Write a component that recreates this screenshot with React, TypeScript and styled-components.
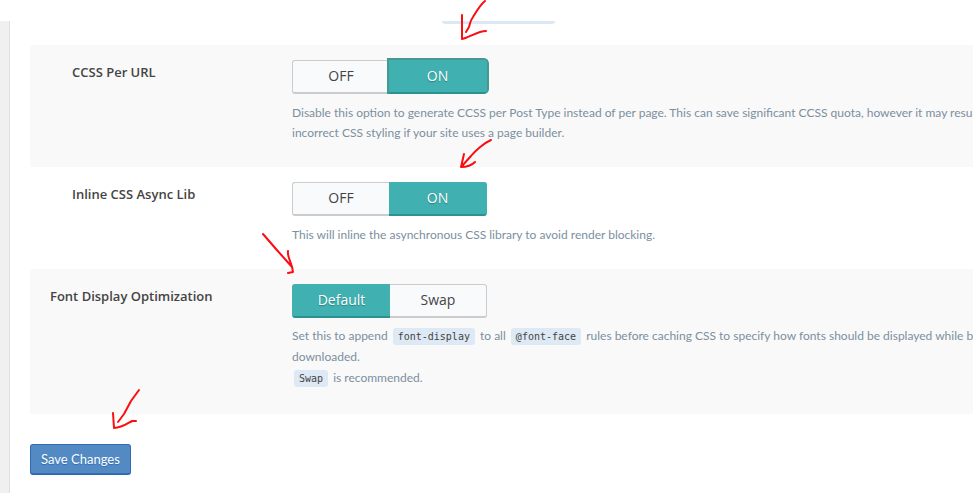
import React from 'react';
import styled, { createGlobalStyle, css } from 'styled-components';

const GlobalStyle = createGlobalStyle`
  *, *::before, *::after { box-sizing: border-box; }
  body {
    margin: 0;
    background: #fff;
    color: #444;
    font-family: "Open Sans", "Noto Sans", sans-serif;
    font-size: 13px;
    overflow: hidden;
  }
`;

const Page = styled.div`
  position: relative;
  display: flex;
  min-height: 100vh;
  padding-top: 21px;
  overflow: hidden;
`;

const Gutter = styled.div`
  flex: none;
  width: 10px;
  background: #f0f0f0;
  border-right: 1px solid #e0e0e0;
`;

const Main = styled.main`
  flex: 1;
  min-width: 0;
  padding-left: 20px;
`;

const TabMarker = styled.div`
  width: 113px;
  height: 3px;
  margin: 0 0 21px 412px;
  border-radius: 0 0 3px 3px;
  background: #dce8f4;
`;

const Row = styled.section<{ $shaded?: boolean }>`
  display: grid;
  grid-template-columns: 262px minmax(0, 1fr);
  padding: 15px 0 24px;
  background: ${(p) => (p.$shaded ? '#f9f9f9' : '#fff')};
`;

const Heading = styled.h3<{ $nested?: boolean }>`
  margin: 2px 0 0;
  padding-left: ${(p) => (p.$nested ? 42 : 20)}px;
  font-size: 13px;
  font-weight: 600;
  line-height: 20px;
`;

const Toggle = styled.div`
  display: flex;
  width: 195px;
  height: 34px;
  margin-bottom: 7px;
`;

const Choice = styled.label<{ $focused?: boolean }>`
  flex: 1;
  display: flex;
  align-items: center;
  justify-content: center;
  padding-bottom: 2px;
  border: 1px solid #ccc;
  border-bottom-width: 2px;
  background: #f9fafc;
  font-size: 14px;
  cursor: pointer;

  &:first-child { border-right: 0; border-radius: 3px 0 0 3px; }
  &:last-child { border-left: 0; border-radius: 0 3px 3px 0; }

  &:has(input:checked) {
    flex: 0 0 98px;
    border-color: #41b0b0 #41b0b0 #2b9292;
    background: #41b0b0;
    color: #fff;
    text-shadow: 0 1px 1px #2b8080;
  }

  ${(p) =>
    p.$focused &&
    css`
      box-shadow: 0 0 0 2px #46998f;
      clip-path: inset(-2px -2px 0 -2px round 0 5px 5px 0);
    `}
`;

const HiddenRadio = styled.input`
  appearance: none;
  width: 0;
  height: 0;
  margin: 0;
`;

const Description = styled.p<{ $tall?: boolean }>`
  margin: 0;
  padding: ${(p) => (p.$tall ? '0 0 2px' : '2px 0 0')};
  color: #7b8f9f;
  font-family: Lato, sans-serif;
  font-size: 12px;
  line-height: ${(p) => (p.$tall ? 21 : 20)}px;
  white-space: nowrap;
`;

const Code = styled.code`
  margin: 0 2px;
  padding: 3px 5px;
  border-radius: 3px;
  background: #dde9f5;
  color: #444;
  font-family: "DejaVu Sans Mono", monospace;
  font-size: 10px;
  line-height: 1;
`;

const SaveButton = styled.button`
  height: 31px;
  margin-top: 30px;
  padding: 0 10px;
  border: 1px solid #2d6cb2;
  border-bottom-width: 2px;
  border-radius: 3px;
  background: #538ac4;
  color: #fff;
  font-family: Lato, sans-serif;
  font-size: 13px;
  text-shadow: 0 1px 1px #2d6cb2;
  white-space: nowrap;
  cursor: pointer;
`;

const Annotations = styled.svg`
  position: absolute;
  top: 0;
  left: 0;
  pointer-events: none;
  fill: none;
  stroke: #fb0d12;
  stroke-width: 2;
  stroke-linecap: round;
  stroke-linejoin: round;
`;

interface SwitchProps {
  name: string;
  label: string;
  options: string[];
  selected: string;
  focused?: boolean;
}

function Switch({ name, label, options, selected, focused }: SwitchProps) {
  return (
    <Toggle role="radiogroup" aria-label={label}>
      {options.map((option) => (
        <Choice key={option} $focused={focused && option === selected}>
          <HiddenRadio type="radio" name={name} value={option} defaultChecked={option === selected} />
          {option}
        </Choice>
      ))}
    </Toggle>
  );
}

export default function App() {
  return (
    <>
      <GlobalStyle />
      <Page>
        <Gutter />
        <Main>
          <TabMarker />
          <Row $shaded>
            <Heading $nested>CCSS Per URL</Heading>
            <div>
              <Switch name="ccss" label="CCSS Per URL" options={['OFF', 'ON']} selected="ON" focused />
              <Description>
                Disable this option to generate CCSS per Post Type instead of per page. This can save significant CCSS quota, however it may result in
                <br />
                incorrect CSS styling if your site uses a page builder.
              </Description>
            </div>
          </Row>
          <Row>
            <Heading $nested>Inline CSS Async Lib</Heading>
            <div>
              <Switch name="async" label="Inline CSS Async Lib" options={['OFF', 'ON']} selected="ON" />
              <Description>This will inline the asynchronous CSS library to avoid render blocking.</Description>
            </div>
          </Row>
          <Row $shaded>
            <Heading>Font Display Optimization</Heading>
            <div>
              <Switch name="font" label="Font Display Optimization" options={['Default', 'Swap']} selected="Default" />
              <Description $tall>
                Set this to append <Code>font-display</Code> to all <Code>@font-face</Code> rules before caching CSS to specify how fonts should be displayed while being
                <br />
                downloaded.
                <br />
                <Code>Swap</Code> is recommended.
              </Description>
            </div>
          </Row>
          <SaveButton type="button">Save Changes</SaveButton>
        </Main>
        <Annotations width="560" height="440" viewBox="0 0 560 440" aria-hidden="true">
          <path d="M485 1C480 5 476 12 473 17C470 21 470 24 469 27L466 32M462 15V39C470 37 478 31 486 31" />
          <path d="M491 140C484 143 475 151 471 156L462 166M464 154L461 167C467 167 472 165 475 162" />
          <path d="M263 234L276 249L292 267M288 251C287 258 292 262 293 272L288 273" />
          <path d="M139 390L131 401L124 414L118 422M113 413L114 428C122 428 128 423 132 421H136" />
        </Annotations>
      </Page>
    </>
  );
}
